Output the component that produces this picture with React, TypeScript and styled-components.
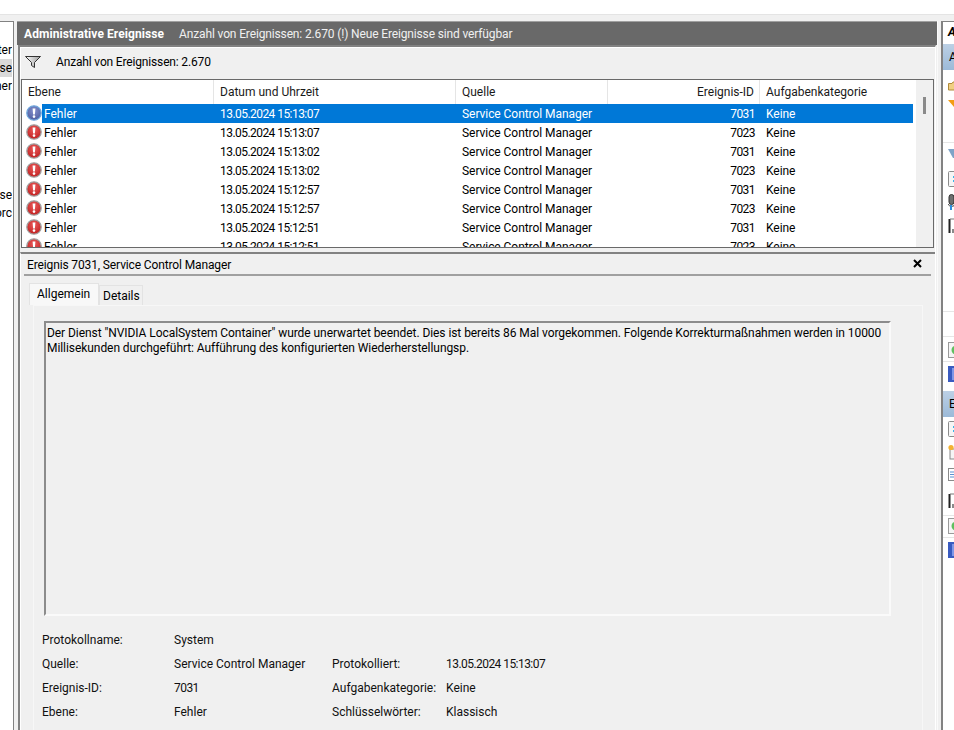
import React from "react";
import styled, { createGlobalStyle } from "styled-components";

const Global = createGlobalStyle`
  html, body { margin: 0; padding: 0; background: #fff; }
  body { width: 954px; height: 730px; overflow: hidden; font-family: Roboto, "Noto Sans", sans-serif; font-size: 12px; color: #000; }
`;

const Page = styled.div`
  width: 954px; height: 730px; overflow: hidden; display: flex; flex-direction: column;
`;
const TopWhite = styled.div`
  height: 14px; background: #fff; border-bottom: 1px solid #e4e4e4; flex: none;
`;
const Main = styled.div`
  flex: 1; display: flex; background: #f0f0f0; padding-top: 6px; min-height: 0;
`;
const LeftPane = styled.div`
  width: 13px; flex: none; background: #fff; border-right: 1px solid #828282; border-top: 1px solid #828282;
  overflow: hidden; display: flex; flex-direction: column; margin-right: 3px;
`;
const LeftItem = styled.div<{ $top: number; $sel?: boolean }>`
  height: 18px; line-height: 18px; margin-top: ${p => p.$top}px; width: 12px; overflow: hidden; white-space: nowrap; font-size: 12px;
  display: flex; justify-content: flex-end;
  background: ${p => (p.$sel ? "#d9d9d9" : "transparent")};
`;
const Center = styled.div`
  width: 920px; flex: none; display: flex; flex-direction: column; min-height: 0; border-right: 1px solid #fafafa;
`;
const TitleBar = styled.div`
  height: 22px; box-sizing: content-box; background: #696969; border-top: 1px solid #a0a0a0; color: #fff; display: flex; align-items: center; padding: 1px 0 0 7px; gap: 15px; flex: none; margin-bottom: -1px;
`;
const TitleStrong = styled.span`font-weight: 700; letter-spacing: 0.08px;`;
const TitleInfo = styled.span`color: #f0f0f0; letter-spacing: -0.14px;`;
const Sub = styled.div`
  flex: 1; display: flex; flex-direction: column; min-height: 0; border-top: 2px solid #828282; margin: 1px 1px 0 1px; border-left: 2px solid #828282; border-right: 1px solid #fff;
`;
const FilterBar = styled.div`
  height: 32px; flex: none; display: flex; align-items: center; padding: 0 0 4px 4px; gap: 15px; background: #f0f0f0; box-sizing: border-box; border-left: 1px solid #fff; border-top: 1px solid #fff;
  letter-spacing: -0.16px;
`;
const ListBox = styled.div`
  height: 167px; flex: none; background: #fff; border: 1px solid #696969; margin: 0 1px; position: relative; overflow: hidden;
`;
const columns = "192px 242px 152px 152px 153px";
const HeaderRow = styled.div`
  height: 24px; display: grid; grid-template-columns: ${columns}; width: 891px; align-items: center;
`;
const HeaderCell = styled.div<{ $right?: boolean }>`
  height: 100%; display: flex; align-items: center; padding: 0 5px 0 6px; box-sizing: border-box; border-right: 1px solid #e5e5e5;
  justify-content: ${p => (p.$right ? "flex-end" : "flex-start")}; color: #1a1a1a;
  &:last-child { border-right: none; }
`;
const Row = styled.div<{ $sel?: boolean }>`
  height: 19px; display: grid; grid-template-columns: ${columns}; width: 891px; align-items: start;
  color: ${p => (p.$sel ? "#fff" : "#000")};
  background: ${p => (p.$sel ? "linear-gradient(to right, transparent 20px, #0078d7 20px)" : "transparent")};
`;
const Cell = styled.div<{ $right?: boolean; $num?: boolean }>`
  padding: 2px 5px 0 6px; line-height: 17px; box-sizing: border-box; white-space: nowrap; overflow: hidden;
  text-align: ${p => (p.$right ? "right" : "left")};
  letter-spacing: ${p => (p.$num ? "-0.55px" : "-0.05px")};
`;
const LevelCell = styled.div`
  display: flex; align-items: flex-start; gap: 2px; padding-left: 4px; height: 19px;
`;
const LevelText = styled.span`
  padding-top: 2px; line-height: 17px;
`;
const ScrollTrack = styled.div`
  position: absolute; right: 0; top: 0; bottom: 0; width: 17px; background: #f0f0f0;
`;
const ScrollThumb = styled.div`
  position: absolute; right: 7px; top: 17px; width: 3px; height: 17px; background: #8a8a8a;
`;
const Detail = styled.div`
  flex: 1; min-height: 0; display: flex; flex-direction: column; margin-top: 4px; border-top: 2px solid #828282; background: #f0f0f0; border-left: 1px solid #fff;
`;
const DetailHead = styled.div`
  height: 20px; flex: none; display: flex; align-items: center; justify-content: space-between; padding: 0 9px 0 3px; border-bottom: 2px solid #a0a0a0; margin: 0 4px 0 3px;
`;
const DetailTitle = styled.span`
  letter-spacing: -0.13px; padding-top: 2px;
`;
const CloseIcon = styled.svg`width: 9px; height: 9px; flex: none; margin-bottom: 2px;`;
const Tabs = styled.div`
  display: flex; align-items: flex-end; padding: 7px 0 0 8px; height: 22px; flex: none;
`;
const Tab = styled.div<{ $active?: boolean }>`
  background: ${p => (p.$active ? "#f8f8f8" : "#f0f0f0")};
  border: 1px solid #e3e3e3; border-bottom: none; box-sizing: border-box;
  height: ${p => (p.$active ? 22 : 20)}px; line-height: ${p => (p.$active ? 20 : 20)}px;
  width: ${p => (p.$active ? 70 : 44)}px; padding-left: ${p => (p.$active ? 7 : 3)}px;
`;
const TabPanel = styled.div`
  flex: 1; margin: 0 12px; background: #f0f0f0; border: 1px solid #f7f7f7; border-bottom: none; padding: 15px 0 0 10px; min-height: 0; display: flex; flex-direction: column;
`;
const MessageBox = styled.div`
  width: 847px; height: 295px; flex: none; box-sizing: border-box; border: 2px solid #8c8c8c; border-right: 2px solid #fafafa; border-bottom: 2px solid #fafafa; padding: 3px 0 0 1px; line-height: 15px; background: #f0f0f0;
  letter-spacing: -0.065px;
`;
const MetaGrid = styled.div`
  display: grid; grid-template-columns: 132px 158px 114px auto; grid-auto-rows: 24px; margin: 12px 0 0 -2px; align-items: center; color: #111;
`;
const MetaNum = styled.span`letter-spacing: -0.55px;`;
const RightPane = styled.div`
  width: 11px; flex: none; margin-left: 3px; border-left: 2px solid #828282; border-top: 1px solid #828282; background: #fff; display: flex; flex-direction: column; overflow: hidden;
`;
const RightHead = styled.div`
  height: 20px; flex: none; font-weight: 700; font-style: italic; display: flex; align-items: center; padding-left: 5px; margin-bottom: 2px;
`;
const RightSection = styled.div<{ $mt?: number }>`
  height: 26px; flex: none; background: linear-gradient(#bcd0e5, #9cbad8); display: flex; align-items: center; padding-left: 6px; margin-top: ${p => p.$mt ?? 0}px;
`;
const ActionIcon = styled.svg<{ $mt: number }>`
  width: 11px; height: 16px; flex: none; margin: ${p => p.$mt}px 0 0 5px; display: block;
`;
const Separator = styled.div<{ $mt: number }>`
  height: 1px; flex: none; background: #e6e6e6; margin-top: ${p => p.$mt}px;
`;

const rows = [
  ["13.05.2024 15:13:07", "7031"],
  ["13.05.2024 15:13:07", "7023"],
  ["13.05.2024 15:13:02", "7031"],
  ["13.05.2024 15:13:02", "7023"],
  ["13.05.2024 15:12:57", "7031"],
  ["13.05.2024 15:12:57", "7023"],
  ["13.05.2024 15:12:51", "7031"],
  ["13.05.2024 15:12:51", "7023"],
];

function ErrIcon({ sel }: { sel?: boolean }) {
  const id = sel ? "glossSel" : "glossErr";
  return (
    <svg width="16" height="16" viewBox="0 0 16 16" style={{ flex: "none", marginTop: 1 }}>
      <defs>
        <radialGradient id={id} cx="50%" cy="35%" r="70%">
          <stop offset="0" stopColor={sel ? "#8590cc" : "#ea5c5c"} />
          <stop offset="1" stopColor={sel ? "#4a5a9c" : "#bd1c1c"} />
        </radialGradient>
      </defs>
      <circle cx="8" cy="8" r="7.2" fill={`url(#${id})`} stroke={sel ? "#6fa6dc" : "#a0a0a0"} strokeWidth="1.3" />
      <path d="M6.6 3.4H9.4L8.9 9.4H7.1Z" fill="#fff" />
      <circle cx="8" cy="11.6" r="1.3" fill="#fff" />
    </svg>
  );
}

function Funnel() {
  return (
    <svg width="16" height="12" viewBox="0 0 16 12" style={{ flex: "none" }}>
      <defs>
        <linearGradient id="funnelFill" x1="0" x2="1" y1="0" y2="0">
          <stop offset="0" stopColor="#fff" />
          <stop offset="1" stopColor="#9a9a9a" />
        </linearGradient>
      </defs>
      <path d="M0.5 0.5H15.5L9.5 6.5V11.5L6.5 9.5V6.5Z" fill="url(#funnelFill)" stroke="#333" strokeWidth="1" />
    </svg>
  );
}

const FolderAction = () => (
  <ActionIcon $mt={10} viewBox="0 0 11 16">
    <path d="M0.5 3.5H4L5 2H11V10H0.5Z" fill="#f0cf82" stroke="#b08a3a" />
  </ActionIcon>
);
const OrangeAction = () => (
  <ActionIcon $mt={4} viewBox="0 0 11 16">
    <path d="M0 0H11V3L6 7Z" fill="#f39c12" />
  </ActionIcon>
);
const FunnelAction = () => (
  <ActionIcon $mt={5} viewBox="0 0 11 16">
    <path d="M0 1H11V7L7 10H5Z" fill="#7fa3c7" />
  </ActionIcon>
);
const BoxAction = ({ mt }: { mt: number }) => (
  <ActionIcon $mt={mt} viewBox="0 0 11 16">
    <rect x="0.5" y="0.5" width="14" height="15" rx="1" fill="#f5f5f5" stroke="#8a8a8a" />
    <rect x="5" y="5" width="2" height="2" fill="#35b5ea" />
    <rect x="5" y="9" width="2" height="2" fill="#35b5ea" />
  </ActionIcon>
);
const MicAction = () => (
  <ActionIcon $mt={7} viewBox="0 0 11 16">
    <rect x="1" y="0.5" width="5" height="10" rx="2.5" fill="#6e6e6e" stroke="#333" />
    <path d="M0 10C1 13 6 13 8 10" stroke="#333" fill="none" />
    <path d="M3 11V16" stroke="#2e8fe0" strokeWidth="2" />
  </ActionIcon>
);
const FloppyAction = ({ mt }: { mt: number }) => (
  <ActionIcon $mt={mt} viewBox="0 0 11 16">
    <path d="M1.5 1V15" stroke="#222" strokeWidth="2" />
    <path d="M2 1H11" stroke="#777" />
    <rect x="4" y="11" width="7" height="4" fill="#8a8a8a" />
  </ActionIcon>
);
const GreenAction = ({ mt }: { mt: number }) => (
  <ActionIcon $mt={mt} viewBox="0 0 11 16">
    <rect x="0.5" y="0.5" width="14" height="15" fill="#f5f5f5" stroke="#9a9a9a" />
    <circle cx="8" cy="8" r="4.5" fill="#5fbf5f" />
  </ActionIcon>
);
const BlueAction = ({ mt }: { mt: number }) => (
  <ActionIcon $mt={mt} viewBox="0 0 11 16">
    <rect width="11" height="16" fill="#3a5bc0" />
    <rect x="4" y="2" width="7" height="12" fill="#7f97e8" />
  </ActionIcon>
);
const BulbAction = () => (
  <ActionIcon $mt={7} viewBox="0 0 11 16">
    <rect x="2" y="5" width="9" height="10" fill="#f5f5f5" stroke="#888" />
    <circle cx="3" cy="3.5" r="2.6" fill="#f3b233" />
  </ActionIcon>
);
const DocAction = () => (
  <ActionIcon $mt={8} viewBox="0 0 11 16">
    <rect x="0.5" y="0.5" width="12" height="12" fill="#fff" stroke="#8a8a8a" />
    <path d="M2 4H8M2 6.5H8M2 9H8" stroke="#5b8fd0" />
  </ActionIcon>
);

export default function App() {
  return (
    <Page>
      <Global />
      <TopWhite />
      <Main>
        <LeftPane>
          <LeftItem $top={19}>ter</LeftItem>
          <LeftItem $top={0} $sel>sse</LeftItem>
          <LeftItem $top={0}>ner</LeftItem>
          <LeftItem $top={91}>sse</LeftItem>
          <LeftItem $top={0}>orc</LeftItem>
        </LeftPane>
        <Center>
          <TitleBar>
            <TitleStrong>Administrative Ereignisse</TitleStrong>
            <TitleInfo>Anzahl von Ereignissen: 2.670 (!) Neue Ereignisse sind verfügbar</TitleInfo>
          </TitleBar>
          <Sub>
            <FilterBar>
              <Funnel />
              <span>Anzahl von Ereignissen: 2.670</span>
            </FilterBar>
            <ListBox>
              <ScrollTrack />
              <ScrollThumb />
              <HeaderRow>
                <HeaderCell>Ebene</HeaderCell>
                <HeaderCell>Datum und Uhrzeit</HeaderCell>
                <HeaderCell>Quelle</HeaderCell>
                <HeaderCell $right>Ereignis-ID</HeaderCell>
                <HeaderCell>Aufgabenkategorie</HeaderCell>
              </HeaderRow>
              {rows.map((r, i) => (
                <Row key={i} $sel={i === 0}>
                  <LevelCell>
                    <ErrIcon sel={i === 0} />
                    <LevelText>Fehler</LevelText>
                  </LevelCell>
                  <Cell $num>{r[0]}</Cell>
                  <Cell>Service Control Manager</Cell>
                  <Cell $right $num>{r[1]}</Cell>
                  <Cell>Keine</Cell>
                </Row>
              ))}
            </ListBox>
            <Detail>
              <DetailHead>
                <DetailTitle>Ereignis 7031, Service Control Manager</DetailTitle>
                <CloseIcon viewBox="0 0 9 9">
                  <path d="M1 1L8 8M8 1L1 8" stroke="#000" strokeWidth="2" />
                </CloseIcon>
              </DetailHead>
              <Tabs>
                <Tab $active>Allgemein</Tab>
                <Tab>Details</Tab>
              </Tabs>
              <TabPanel>
                <MessageBox>
                  Der Dienst "NVIDIA LocalSystem Container" wurde unerwartet beendet. Dies ist bereits 86 Mal vorgekommen. Folgende Korrekturmaßnahmen werden in 10000 Millisekunden durchgeführt: Aufführung des konfigurierten Wiederherstellungsp.
                </MessageBox>
                <MetaGrid>
                  <span>Protokollname:</span><span>System</span><span /><span />
                  <span>Quelle:</span><span>Service Control Manager</span><span>Protokolliert:</span><MetaNum>13.05.2024 15:13:07</MetaNum>
                  <span>Ereignis-ID:</span><MetaNum>7031</MetaNum><span>Aufgabenkategorie:</span><span>Keine</span>
                  <span>Ebene:</span><span>Fehler</span><span>Schlüsselwörter:</span><span>Klassisch</span>
                </MetaGrid>
              </TabPanel>
            </Detail>
          </Sub>
        </Center>
        <RightPane>
          <RightHead>A</RightHead>
          <RightSection>A</RightSection>
          <FolderAction />
          <OrangeAction />
          <Separator $mt={26} />
          <FunnelAction />
          <BoxAction mt={7} />
          <MicAction />
          <FloppyAction mt={8} />
          <Separator $mt={77} />
          <Separator $mt={24} />
          <GreenAction mt={5} />
          <Separator $mt={3} />
          <BlueAction mt={4} />
          <RightSection $mt={9}>E</RightSection>
          <BoxAction mt={4} />
          <BulbAction />
          <DocAction />
          <FloppyAction mt={9} />
          <Separator $mt={6} />
          <GreenAction mt={2} />
          <Separator $mt={3} />
          <BlueAction mt={4} />
        </RightPane>
      </Main>
    </Page>
  );
}
